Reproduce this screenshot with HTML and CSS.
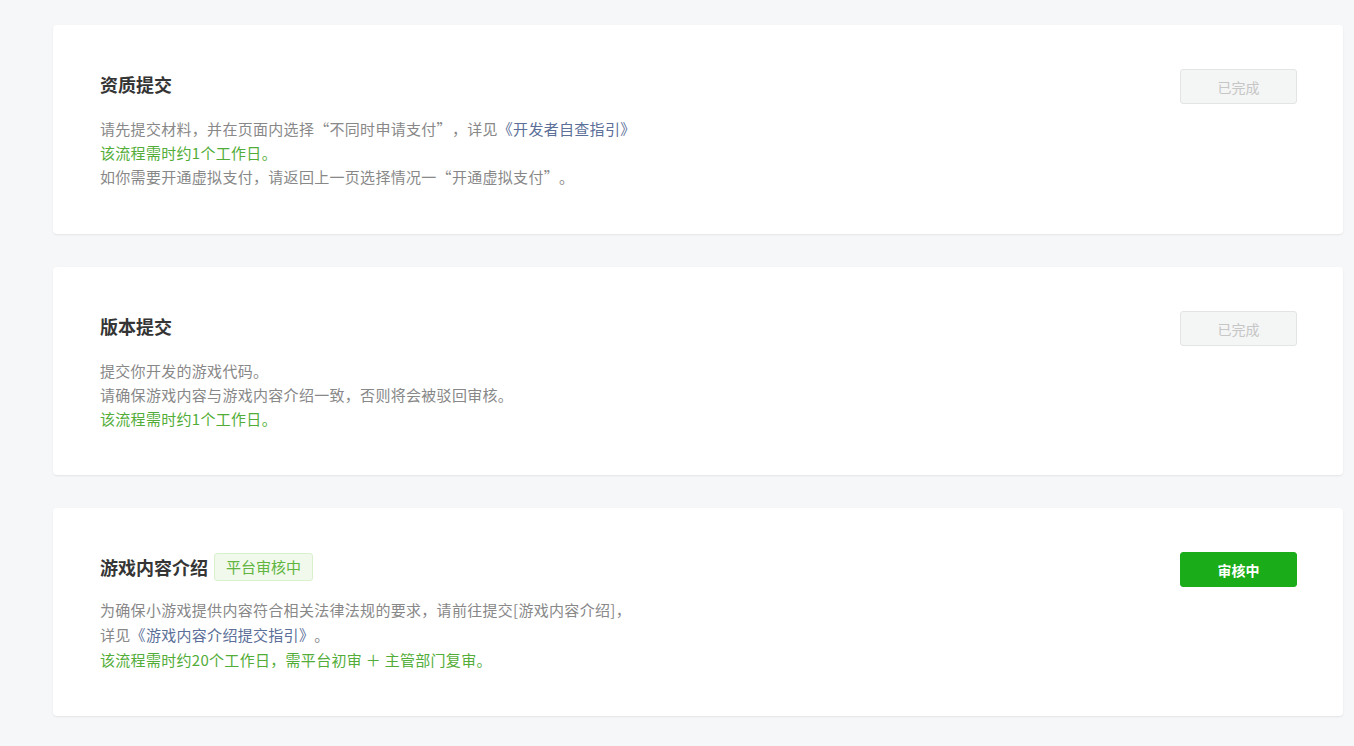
FILE: index.html
```html
<!DOCTYPE html>
<html lang="zh-CN">
<head>
<meta charset="utf-8">
<title>流程</title>
<link rel="stylesheet" href="styles.css">
</head>
<body>
<div class="page">
  <section class="card card-first">
    <div class="card-main">
      <div class="card-head"><h2 class="card-title">资质提交</h2></div>
      <div class="card-desc">
        <p>请先提交材料，并在页面内选择“不同时申请支付”，详见<a class="link" href="#">《开发者自查指引》</a></p>
        <p class="green">该流程需时约1个工作日。</p>
        <p>如你需要开通虚拟支付，请返回上一页选择情况一“开通虚拟支付”。</p>
      </div>
    </div>
    <button class="btn btn-disabled">已完成</button>
  </section>

  <section class="card">
    <div class="card-main">
      <div class="card-head"><h2 class="card-title">版本提交</h2></div>
      <div class="card-desc">
        <p>提交你开发的游戏代码。</p>
        <p>请确保游戏内容与游戏内容介绍一致，否则将会被驳回审核。</p>
        <p class="green">该流程需时约1个工作日。</p>
      </div>
    </div>
    <button class="btn btn-disabled">已完成</button>
  </section>

  <section class="card">
    <div class="card-main">
      <div class="card-head"><h2 class="card-title">游戏内容介绍</h2><span class="tag">平台审核中</span></div>
      <div class="card-desc card-desc-loose">
        <p>为确保小游戏提供内容符合相关法律法规的要求，请前往提交[游戏内容介绍]，</p>
        <p>详见<a class="link" href="#">《游戏内容介绍提交指引》</a>。</p>
        <p class="green">该流程需时约20个工作日，需平台初审 ＋ 主管部门复审。</p>
      </div>
    </div>
    <button class="btn btn-primary">审核中</button>
  </section>
</div>
</body>
</html>
```

FILE: styles.css
```css
html, body {
  margin: 0;
  padding: 0;
  background: #f6f7f9;
  font-family: "Noto Sans CJK SC", "Microsoft YaHei", sans-serif;
}
.page {
  padding: 25px 11px 30px 53px;
  display: flex;
  flex-direction: column;
  gap: 33px;
}
.card {
  background: #fff;
  border-radius: 4px;
  box-shadow: 0 1px 2px rgba(0, 0, 0, 0.08);
  padding: 44px 46px 44px 47px;
  display: flex;
  justify-content: space-between;
  align-items: flex-start;
}
.card-first { padding-bottom: 45px; }
.card-head {
  display: flex;
  align-items: center;
  height: 30px;
  gap: 6px;
}
.card-title {
  margin: 0;
  font-size: 18px;
  font-weight: 700;
  color: #353535;
  line-height: 30px;
}
.tag {
  display: inline-block;
  box-sizing: border-box;
  height: 28px;
  line-height: 26px;
  padding: 0 11px;
  font-size: 15px;
  color: #5fb540;
  background: #f1f9ec;
  border: 1px solid #d9f0cd;
  border-radius: 3px;
}
.card-desc {
  margin-top: 18px;
  font-size: 15px;
  line-height: 24px;
  letter-spacing: 0.3px;
  color: #888;
  text-spacing-trim: space-all;
}
.card-desc-loose {
  margin-top: 15px;
  line-height: 25px;
}
.card-desc p { margin: 0; }
.green { color: #52ad38; }
.link { color: #5b6f98; text-decoration: none; }
.btn {
  box-sizing: border-box;
  width: 117px;
  height: 35px;
  border-radius: 3px;
  font-family: inherit;
  font-size: 14px;
  padding: 0;
  flex: none;
}
.btn-disabled {
  background: #f4f5f5;
  border: 1px solid #e3e5e5;
  color: #c6c6c6;
}
.btn-primary {
  background: #1aad19;
  border: 1px solid #1aad19;
  color: #fff;
  font-weight: 700;
}
```
